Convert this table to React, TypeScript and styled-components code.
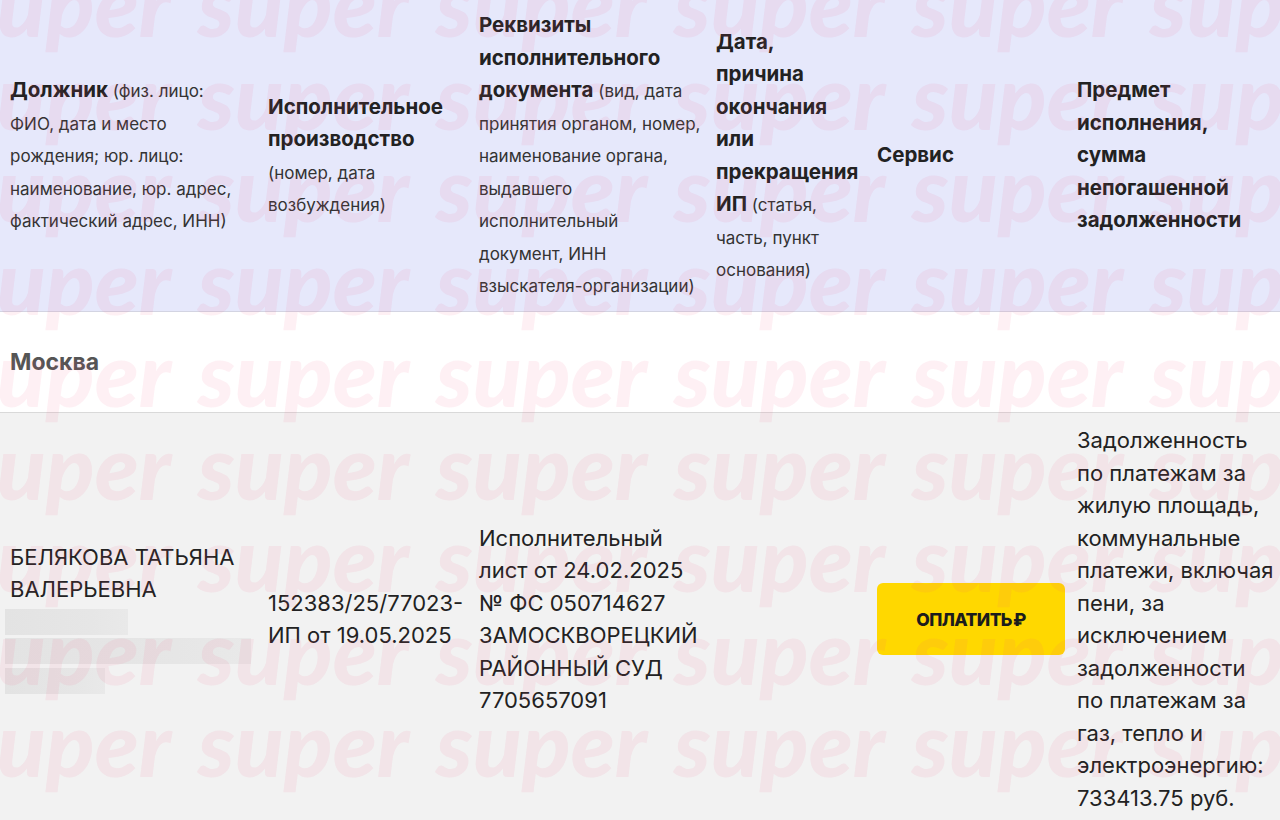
import React from "react";
import styled, { createGlobalStyle } from "styled-components";

const GlobalStyle = createGlobalStyle`
  html, body {
    margin: 0;
    padding: 0;
    background: #f2f2f2;
  }
  body {
    font-family: Inter, "Noto Sans", Roboto, sans-serif;
    color: #222;
  }
`;

const Page = styled.div`
  position: relative;
  width: 1280px;
  height: 820px;
  overflow: hidden;
  background: #f2f2f2;
`;

const Table = styled.table`
  width: 1280px;
  border-collapse: collapse;
  table-layout: fixed;
`;

const HeadRow = styled.tr`
  background: #e6e8fb;
  border-bottom: 1px solid #d3d4e2;
`;

const HeadCell = styled.th<{ $pr?: number }>`
  height: 295px;
  padding: 8px ${(p) => p.$pr ?? 8}px 8px 10px;
  text-align: left;
  vertical-align: middle;
  font-size: 20.5px;
  font-weight: 700;
  line-height: 32.5px;
  color: #222;
`;

const Note = styled.span`
  font-size: 17px;
  font-weight: 400;
  line-height: 1;
  color: #333;
`;

const CityRow = styled.tr`
  background: #ffffff;
  border-bottom: 1px solid #d9d9d9;
`;

const CityCell = styled.td`
  height: 100px;
  padding: 0 10px;
  vertical-align: middle;
  font-size: 23px;
  font-weight: 700;
  color: #555;
`;

const DataRow = styled.tr`
  background: #f2f2f2;
`;

const DataCell = styled.td<{ $pr?: number }>`
  padding: 11px ${(p) => p.$pr ?? 8}px 11px 10px;
  vertical-align: middle;
  font-size: 22px;
  font-weight: 400;
  line-height: 32.5px;
  color: #222;
`;

const Redacted = styled.div<{ $w: number }>`
  width: ${(p) => p.$w}px;
  height: 26px;
  margin: 3px 0 3.5px -5px;
  background: linear-gradient(to right, #e3e3e3 0%, #e6e6e6 70%, #e9e9e9 100%);
  filter: blur(0.6px);
`;

const PayButton = styled.button`
  width: 188px;
  height: 72px;
  border: none;
  border-radius: 6px;
  background: #ffd800;
  font-family: Inter, Roboto, sans-serif;
  font-size: 17.5px;
  font-weight: 800;
  letter-spacing: -0.6px;
  color: #1c1c1c;
  text-transform: uppercase;
  cursor: pointer;
`;

const Ruble = styled.span`
  margin-left: 1px;
`;

const Watermark = styled.div`
  position: absolute;
  left: -40px;
  top: -44px;
  z-index: 2;
  display: flex;
  flex-direction: column;
  pointer-events: none;
`;

const WmRow = styled.div`
  display: flex;
  height: 92.5px;
`;

const WmWord = styled.span`
  flex: 0 0 238px;
  font-family: Lato, Inter, sans-serif;
  font-style: italic;
  font-weight: 900;
  font-size: 90px;
  line-height: 92.5px;
  color: rgba(240, 80, 130, 0.085);
  white-space: nowrap;
`;

const colWidths = [258, 211, 237, 161, 200, 213];

export default function App() {
  const rows = Array.from({ length: 10 });
  const words = Array.from({ length: 6 });
  return (
    <Page>
      <GlobalStyle />
      <Table>
        <colgroup>
          {colWidths.map((w, i) => (
            <col key={i} style={{ width: w }} />
          ))}
        </colgroup>
        <thead>
          <HeadRow>
            <HeadCell>
              Должник{" "}
              <Note>
                (физ. лицо: ФИО, дата и место рождения; юр. лицо: наименование, юр. адрес,
                фактический адрес, ИНН)
              </Note>
            </HeadCell>
            <HeadCell $pr={4}>
              Исполнительное производство <Note>(номер, дата возбуждения)</Note>
            </HeadCell>
            <HeadCell $pr={2}>
              Реквизиты исполнительного документа{" "}
              <Note>
                (вид, дата принятия органом, номер, наименование органа, выдавшего
                исполнительный документ, ИНН взыскателя-организации)
              </Note>
            </HeadCell>
            <HeadCell $pr={4}>
              Дата, причина окончания или прекращения ИП{" "}
              <Note>(статья, часть, пункт основания)</Note>
            </HeadCell>
            <HeadCell>Сервис</HeadCell>
            <HeadCell $pr={5}>Предмет исполнения, сумма непогашенной задолженности</HeadCell>
          </HeadRow>
        </thead>
        <tbody>
          <CityRow>
            <CityCell colSpan={6}>Москва</CityCell>
          </CityRow>
          <DataRow>
            <DataCell>
              БЕЛЯКОВА ТАТЬЯНА ВАЛЕРЬЕВНА
              <Redacted $w={123} />
              <Redacted $w={246} />
              <Redacted $w={100} />
            </DataCell>
            <DataCell $pr={4}>152383/25/77023-ИП от 19.05.2025</DataCell>
            <DataCell $pr={2}>
              Исполнительный лист от 24.02.2025 № ФС 050714627 ЗАМОСКВОРЕЦКИЙ РАЙОННЫЙ СУД
              7705657091
            </DataCell>
            <DataCell />
            <DataCell>
              <PayButton>
                Оплатить<Ruble>₽</Ruble>
              </PayButton>
            </DataCell>
            <DataCell $pr={4}>
              Задолженность по платежам за жилую площадь, коммунальные платежи, включая пени,
              за исключением задолженности по платежам за газ, тепло и электроэнергию:
              733413.75 руб.
            </DataCell>
          </DataRow>
        </tbody>
      </Table>
      <Watermark aria-hidden="true">
        {rows.map((_, r) => (
          <WmRow key={r}>
            {words.map((_, w) => (
              <WmWord key={w}>super</WmWord>
            ))}
          </WmRow>
        ))}
      </Watermark>
    </Page>
  );
}
